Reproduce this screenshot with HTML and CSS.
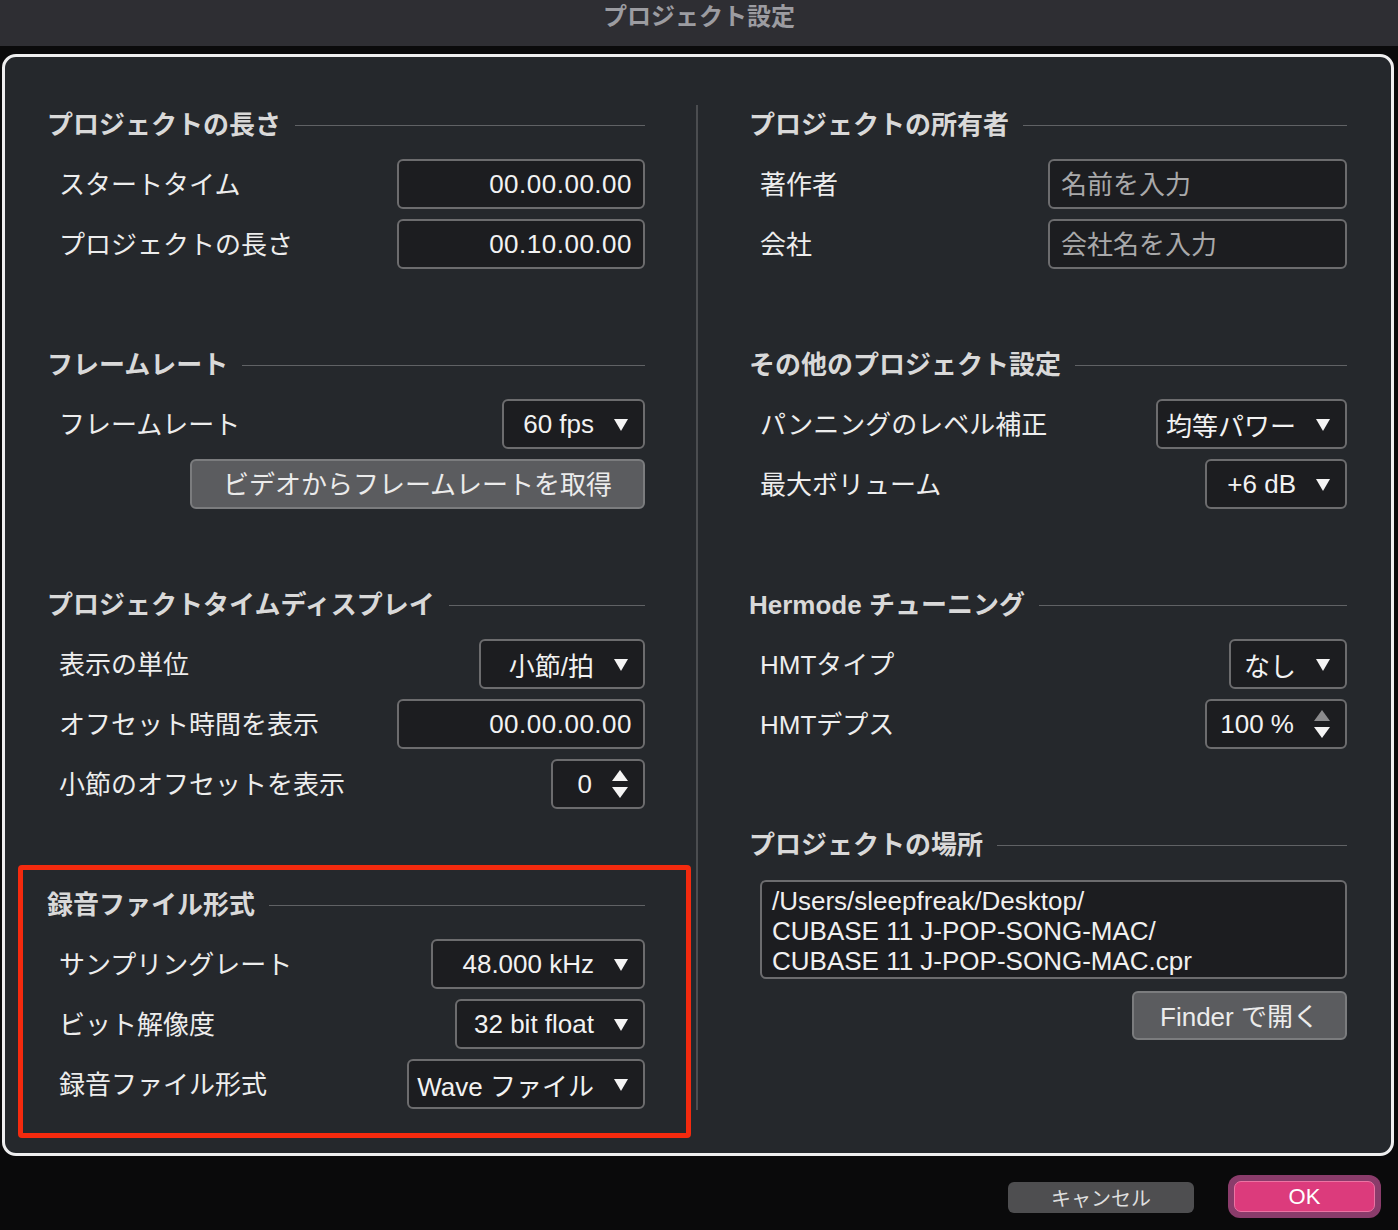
FILE: index.html
```html
<!DOCTYPE html>
<html lang="ja">
<head>
<meta charset="utf-8">
<title>プロジェクト設定</title>
<link rel="stylesheet" href="styles.css">
</head>
<body>
<div class="titlebar">プロジェクト設定</div>
<div class="panel">
  <div class="col">
    <section class="sec">
      <div class="hdr"><span>プロジェクトの長さ</span><i class="rule"></i></div>
      <div class="row"><span class="lbl">スタートタイム</span><div class="field w248">00.00.00.00</div></div>
      <div class="row"><span class="lbl">プロジェクトの長さ</span><div class="field w248">00.10.00.00</div></div>
    </section>
    <section class="sec">
      <div class="hdr"><span>フレームレート</span><i class="rule"></i></div>
      <div class="row"><span class="lbl">フレームレート</span><div class="dd w143"><span>60 fps</span><svg class="arr" viewBox="0 0 14 12"><path d="M0 0H14L7 12Z"/></svg></div></div>
      <div class="row end"><div class="btn w455">ビデオからフレームレートを取得</div></div>
    </section>
    <section class="sec">
      <div class="hdr"><span>プロジェクトタイムディスプレイ</span><i class="rule"></i></div>
      <div class="row"><span class="lbl">表示の単位</span><div class="dd w166"><span>小節/拍</span><svg class="arr" viewBox="0 0 14 12"><path d="M0 0H14L7 12Z"/></svg></div></div>
      <div class="row"><span class="lbl">オフセット時間を表示</span><div class="field w248">00.00.00.00</div></div>
      <div class="row"><span class="lbl">小節のオフセットを表示</span><div class="dd w94"><span>0</span><svg class="spin" viewBox="0 0 16 28"><path d="M0 11L8 0L16 11Z"/><path d="M0 17H16L8 28Z"/></svg></div></div>
    </section>
    <section class="sec">
      <div class="hdr"><span>録音ファイル形式</span><i class="rule"></i></div>
      <div class="row"><span class="lbl">サンプリングレート</span><div class="dd w214"><span>48.000 kHz</span><svg class="arr" viewBox="0 0 14 12"><path d="M0 0H14L7 12Z"/></svg></div></div>
      <div class="row"><span class="lbl">ビット解像度</span><div class="dd w190"><span>32 bit float</span><svg class="arr" viewBox="0 0 14 12"><path d="M0 0H14L7 12Z"/></svg></div></div>
      <div class="row"><span class="lbl">録音ファイル形式</span><div class="dd w238"><span>Wave ファイル</span><svg class="arr" viewBox="0 0 14 12"><path d="M0 0H14L7 12Z"/></svg></div></div>
    </section>
  </div>
  <div class="mid"><div class="divider"></div></div>
  <div class="col right">
    <section class="sec">
      <div class="hdr"><span>プロジェクトの所有者</span><i class="rule"></i></div>
      <div class="row"><span class="lbl">著作者</span><div class="field ph w299">名前を入力</div></div>
      <div class="row"><span class="lbl">会社</span><div class="field ph w299">会社名を入力</div></div>
    </section>
    <section class="sec">
      <div class="hdr"><span>その他のプロジェクト設定</span><i class="rule"></i></div>
      <div class="row"><span class="lbl">パンニングのレベル補正</span><div class="dd w191"><span>均等パワー</span><svg class="arr" viewBox="0 0 14 12"><path d="M0 0H14L7 12Z"/></svg></div></div>
      <div class="row"><span class="lbl">最大ボリューム</span><div class="dd w142"><span>+6 dB</span><svg class="arr" viewBox="0 0 14 12"><path d="M0 0H14L7 12Z"/></svg></div></div>
    </section>
    <section class="sec">
      <div class="hdr"><span>Hermode チューニング</span><i class="rule"></i></div>
      <div class="row"><span class="lbl">HMTタイプ</span><div class="dd w118"><span>なし</span><svg class="arr" viewBox="0 0 14 12"><path d="M0 0H14L7 12Z"/></svg></div></div>
      <div class="row"><span class="lbl">HMTデプス</span><div class="dd w142"><span>100 %</span><svg class="spin" viewBox="0 0 16 28"><path class="off" d="M0 11L8 0L16 11Z"/><path d="M0 17H16L8 28Z"/></svg></div></div>
    </section>
    <section class="sec">
      <div class="hdr"><span>プロジェクトの場所</span><i class="rule"></i></div>
      <div class="pathbox">/Users/sleepfreak/Desktop/<br>CUBASE 11 J-POP-SONG-MAC/<br>CUBASE 11 J-POP-SONG-MAC.cpr</div>
      <div class="finder-row"><div class="btn w215">Finder で開く</div></div>
    </section>
  </div>
  <div class="highlight"></div>
</div>
<div class="footer">
  <div class="cancel">キャンセル</div>
  <div class="ok-ring"><div class="ok">OK</div></div>
</div>
</body>
</html>
```

FILE: styles.css
```css
html, body {
  margin: 0;
  padding: 0;
}
body {
  width: 1398px;
  height: 1230px;
  overflow: hidden;
  background: #0a0a0b;
  font-family: "Liberation Sans", "Noto Sans CJK JP", sans-serif;
  color: #ececec;
}
.titlebar {
  height: 46px;
  background: #2e2e33;
  color: #9c9ca1;
  font-weight: bold;
  font-size: 24px;
  line-height: 34px;
  text-align: center;
}
.panel {
  position: relative;
  margin: 8px 0 0 2px;
  width: 1392px;
  height: 1102px;
  box-sizing: border-box;
  border: 3px solid #efeff0;
  border-radius: 14px;
  background: #25282c;
  padding: 37px 0 0 42px;
  display: grid;
  grid-template-columns: 598px 104px 598px;
  align-items: start;
}
.mid {
  display: flex;
  justify-content: center;
}
.divider {
  width: 2px;
  height: 1005px;
  margin-top: 11px;
  background: #4b4d50;
}
.sec {
  margin-bottom: 60px;
}
.hdr {
  height: 60px;
  display: flex;
  align-items: center;
  font-weight: bold;
  font-size: 26px;
  color: #d9d9d9;
  white-space: nowrap;
}
.hdr span {
  padding-bottom: 4px;
}
.rule {
  flex: 1;
  height: 1px;
  margin: 2px 0 0 14px;
  background: #606265;
}
.row {
  height: 60px;
  display: flex;
  align-items: center;
  justify-content: space-between;
  padding-left: 12px;
}
.right .row {
  padding-left: 11px;
}
.row.end {
  justify-content: flex-end;
}
.lbl {
  font-size: 26px;
  color: #ededed;
  white-space: nowrap;
  padding-bottom: 4px;
}
.field, .dd {
  height: 50px;
  box-sizing: border-box;
  border: 2px solid #6c6c6e;
  border-radius: 6px;
  background: #1c1d20;
  display: flex;
  align-items: center;
  justify-content: flex-end;
  font-size: 26px;
  color: #f2f2f2;
  white-space: nowrap;
}
.field {
  padding: 0 11px;
  letter-spacing: 0.5px;
}
.field.ph {
  justify-content: flex-start;
  color: #a9a9aa;
  letter-spacing: 0;
  padding-bottom: 3px;
}
.dd {
  padding-right: 15px;
  gap: 20px;
}
.arr {
  width: 14px;
  height: 12px;
  fill: #f4f4f4;
  margin-top: 1px;
}
.spin {
  width: 16px;
  height: 28px;
  fill: #f4f4f4;
}
.spin .off {
  fill: #8b8b8d;
}
.btn {
  height: 50px;
  box-sizing: border-box;
  border: 2px solid #7b7c7e;
  border-radius: 6px;
  background: #5b5c5f;
  display: flex;
  align-items: center;
  justify-content: center;
  font-size: 26px;
  color: #ebebeb;
  white-space: nowrap;
  padding-bottom: 3px;
}
.w94 { width: 94px; }
.w118 { width: 118px; }
.w142 { width: 142px; }
.w143 { width: 143px; }
.w166 { width: 166px; }
.w190 { width: 190px; }
.w191 { width: 191px; }
.w214 { width: 214px; }
.w215 { width: 215px; height: 49px; }
.w238 { width: 238px; }
.w248 { width: 248px; }
.w299 { width: 299px; }
.w455 { width: 455px; }
.pathbox {
  margin: 6px 0 0 11px;
  width: 587px;
  height: 99px;
  box-sizing: border-box;
  border: 2px solid #6c6c6e;
  border-radius: 6px;
  background: #1c1d20;
  padding: 4px 10px;
  font-size: 26px;
  line-height: 30px;
  color: #f0f0f0;
  white-space: nowrap;
}
.finder-row {
  margin-top: 12px;
  display: flex;
  justify-content: flex-end;
}
.highlight {
  position: absolute;
  left: 13px;
  top: 808px;
  width: 673px;
  height: 273px;
  box-sizing: border-box;
  border: 5px solid #f42a0e;
  border-radius: 4px;
  pointer-events: none;
}
.footer {
  height: 74px;
  display: flex;
  justify-content: flex-end;
  align-items: flex-start;
  gap: 34px;
  padding: 19px 17px 0 0;
  box-sizing: border-box;
}
.cancel {
  margin-top: 7px;
  width: 186px;
  height: 31px;
  border-radius: 6px;
  background: #4e4e50;
  color: #dedede;
  font-size: 20px;
  display: flex;
  align-items: center;
  justify-content: center;
}
.ok-ring {
  padding: 6px;
  border-radius: 12px;
  background: #8a3c6b;
}
.ok {
  width: 141px;
  height: 31px;
  box-sizing: border-box;
  border: 1px solid #ec74a3;
  border-radius: 7px;
  background: #dc3b7c;
  color: #ffffff;
  font-size: 22px;
  display: flex;
  align-items: center;
  justify-content: center;
}
```
